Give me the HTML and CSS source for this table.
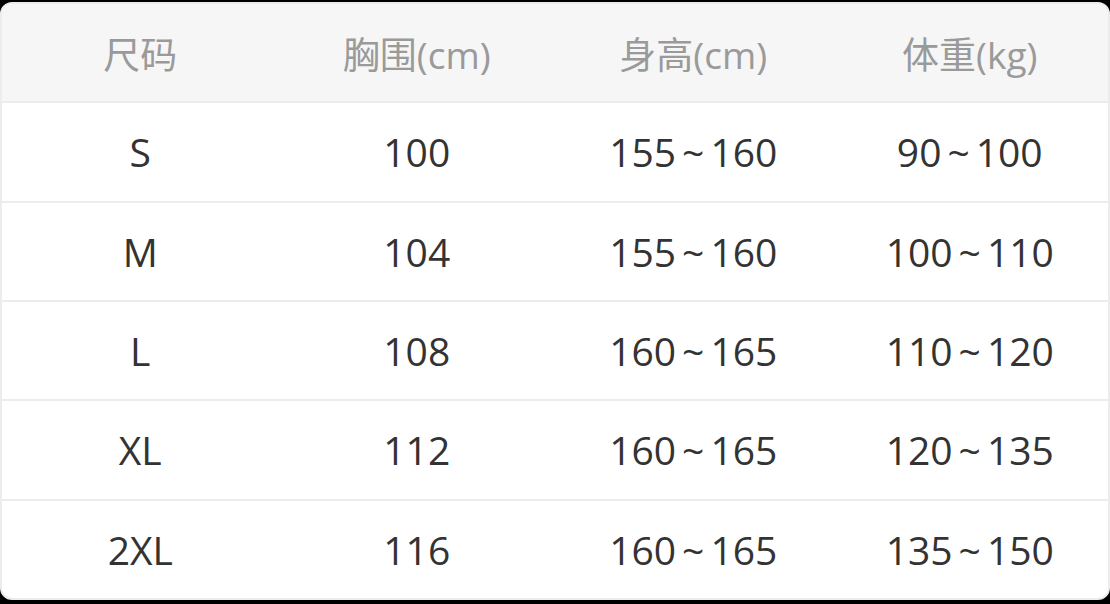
FILE: index.html
```html
<!DOCTYPE html>
<html lang="zh">
<head>
<meta charset="utf-8">
<link rel="stylesheet" href="styles.css">
</head>
<body>
<div class="card">
  <div class="row head">
    <div class="cell">尺码</div>
    <div class="cell">胸围(cm)</div>
    <div class="cell">身高(cm)</div>
    <div class="cell">体重(kg)</div>
  </div>
  <div class="row">
    <div class="cell">S</div>
    <div class="cell">100</div>
    <div class="cell">155<span class="t">~</span>160</div>
    <div class="cell">90<span class="t">~</span>100</div>
  </div>
  <div class="row">
    <div class="cell">M</div>
    <div class="cell">104</div>
    <div class="cell">155<span class="t">~</span>160</div>
    <div class="cell">100<span class="t">~</span>110</div>
  </div>
  <div class="row">
    <div class="cell">L</div>
    <div class="cell">108</div>
    <div class="cell">160<span class="t">~</span>165</div>
    <div class="cell">110<span class="t">~</span>120</div>
  </div>
  <div class="row">
    <div class="cell">XL</div>
    <div class="cell">112</div>
    <div class="cell">160<span class="t">~</span>165</div>
    <div class="cell">120<span class="t">~</span>135</div>
  </div>
  <div class="row last">
    <div class="cell">2XL</div>
    <div class="cell">116</div>
    <div class="cell">160<span class="t">~</span>165</div>
    <div class="cell">135<span class="t">~</span>150</div>
  </div>
</div>
</body>
</html>
```

FILE: styles.css
```css
html, body {
  margin: 0;
  padding: 0;
  background: #000;
  width: 1110px;
  height: 604px;
  overflow: hidden;
}
body {
  padding: 2px 0 4px 0;
  box-sizing: border-box;
}
.card {
  height: 100%;
  box-sizing: border-box;
  background: #fff;
  border: 2px solid #ececec;
  border-radius: 12px;
  overflow: hidden;
  display: flex;
  flex-direction: column;
  font-family: "Open Sans", "Noto Sans CJK SC", sans-serif;
  font-size: 39px;
  color: #333;
}
.row {
  flex: 1;
  display: grid;
  grid-template-columns: repeat(4, 1fr);
  border-bottom: 2px solid #ececec;
}
.row.last {
  border-bottom: none;
}
.row.head {
  background: #f6f6f6;
  color: #9a9a9a;
  font-size: 37px;
}
.cell {
  display: flex;
  align-items: center;
  justify-content: center;
}
.t {
  margin: 0 6px;
}
```
